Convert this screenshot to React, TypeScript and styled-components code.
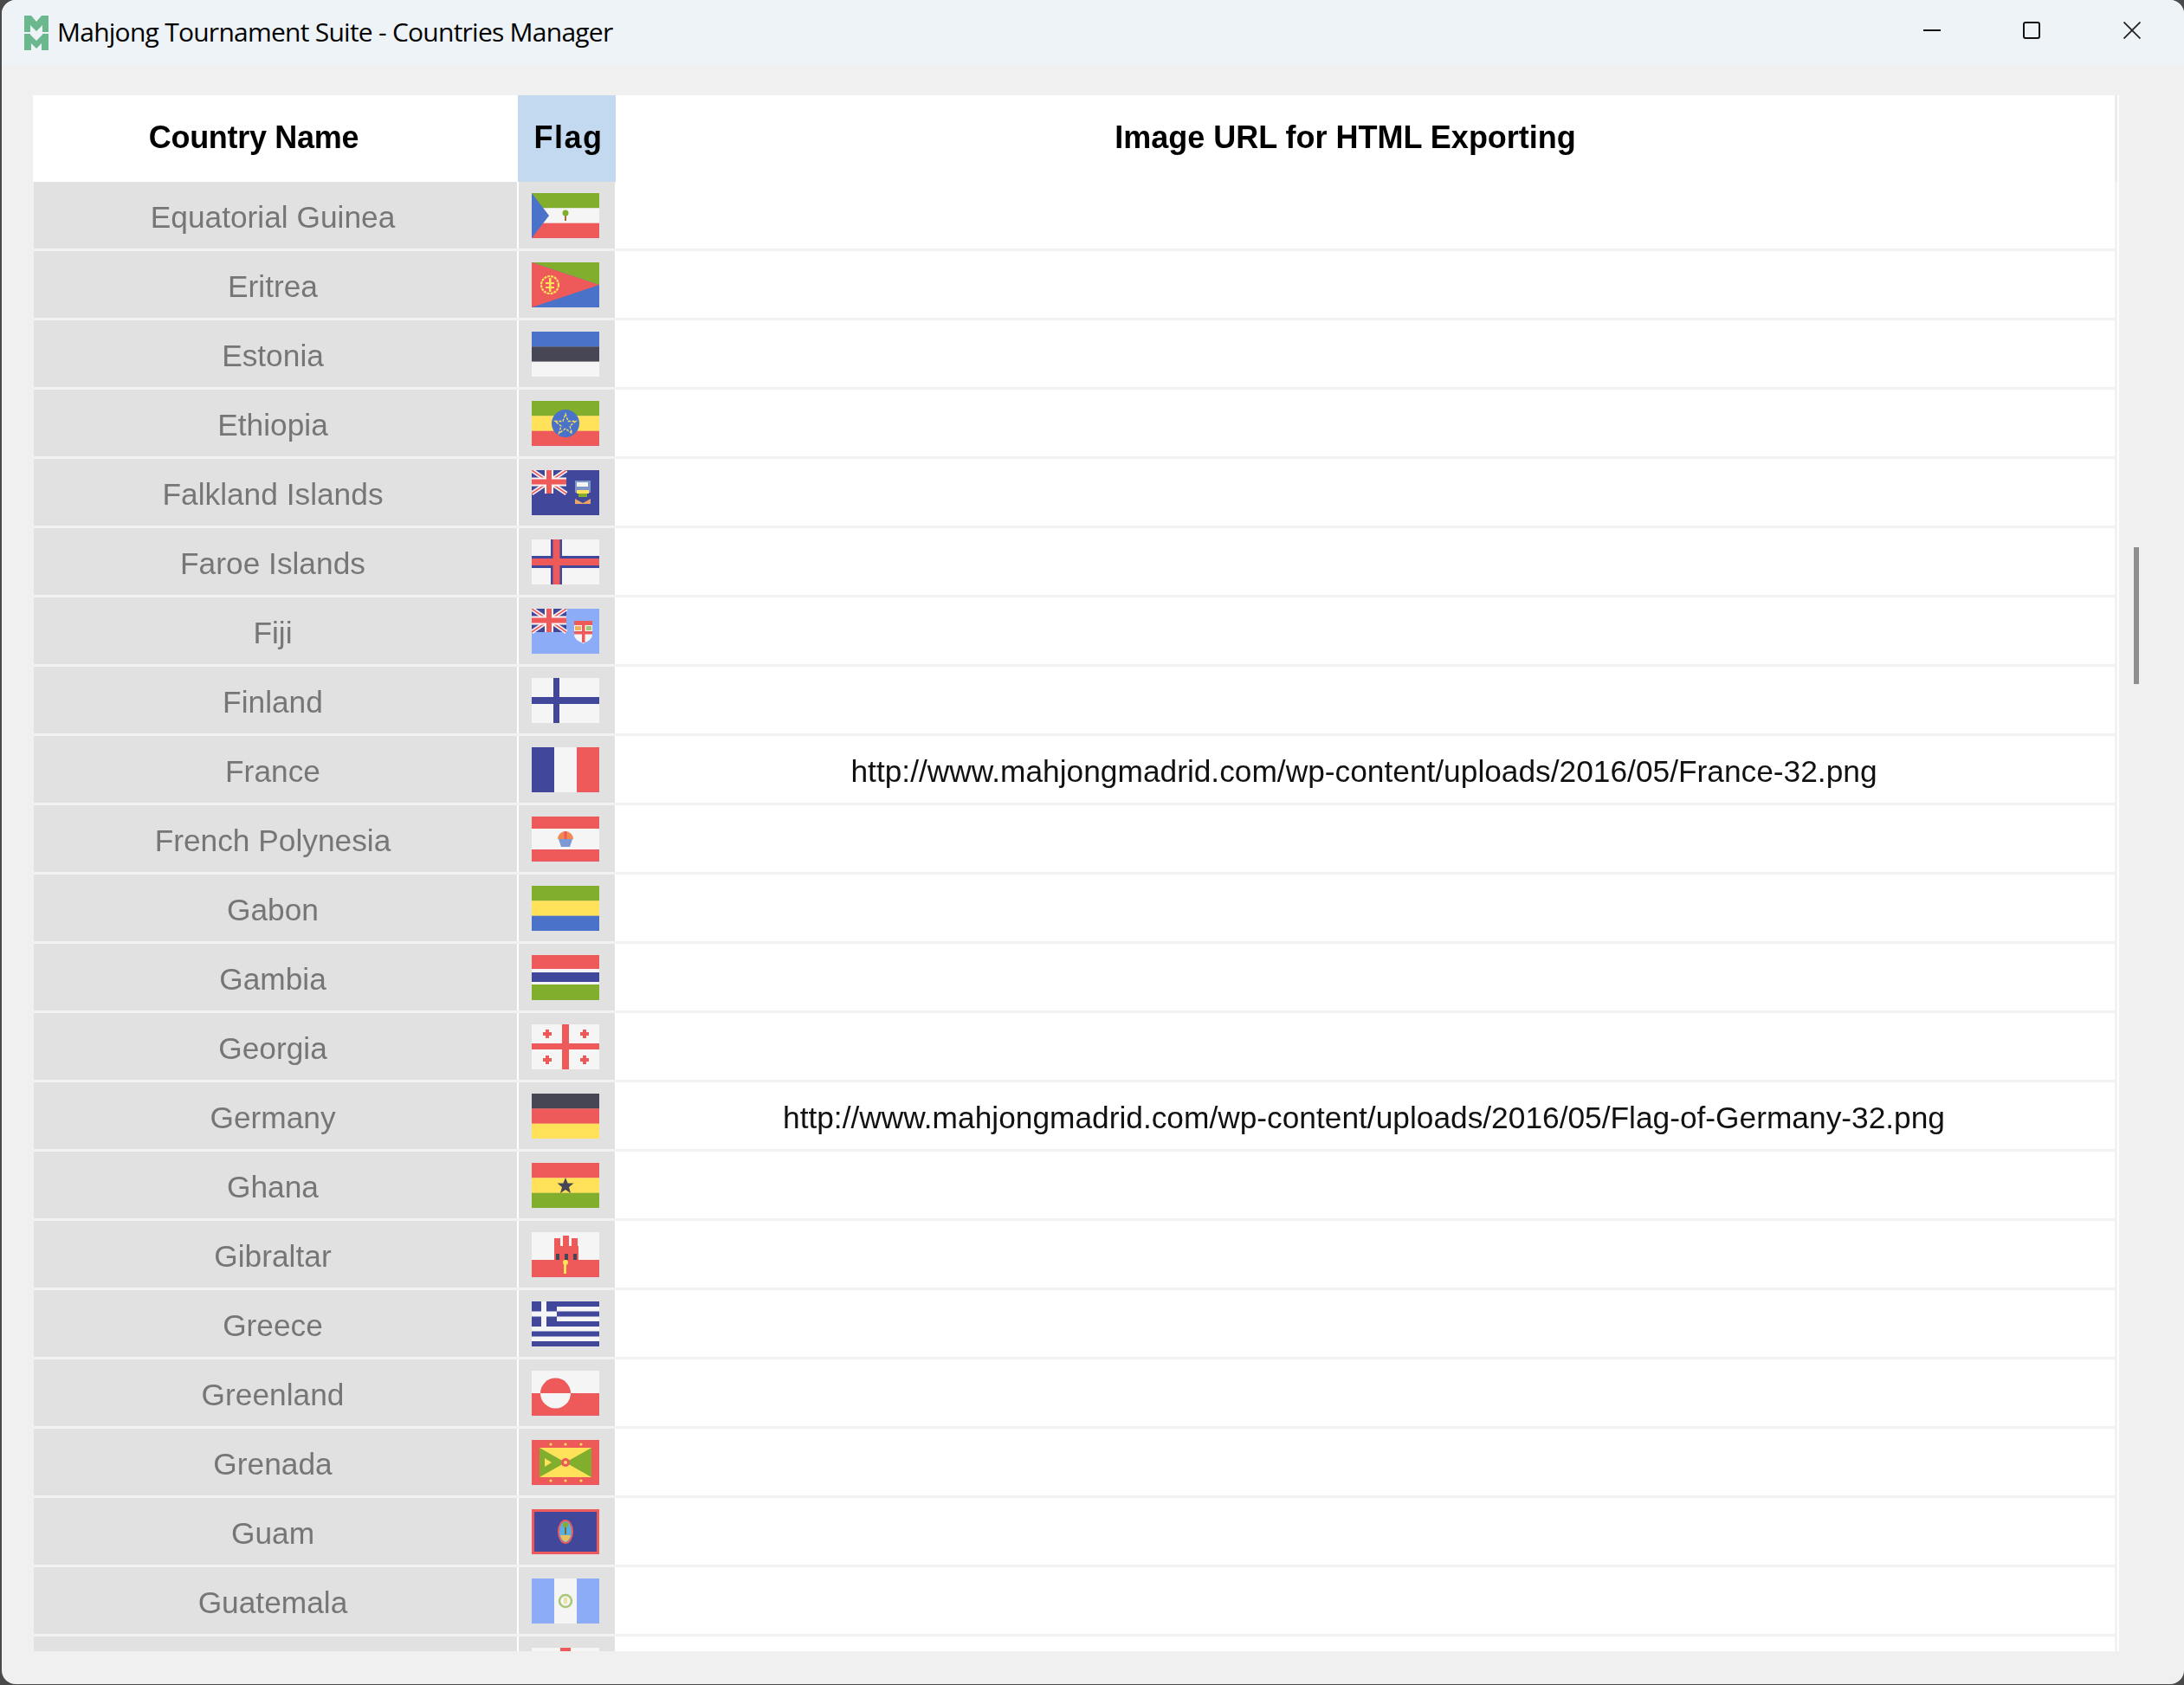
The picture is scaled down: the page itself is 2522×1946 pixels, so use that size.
import React from 'react';
import styled, { createGlobalStyle } from 'styled-components';

const GREEN = '#82ae2e';
const BLUE = '#4a72c8';
const RED = '#ee5a5a';
const WHITE = '#f5f5f5';
const NAVY = '#41479b';
const YELLOW = '#ffe15a';
const DARK = '#464655';
const SKY = '#8cacf8';

const GlobalStyle = createGlobalStyle`
  html, body {
    margin: 0;
    padding: 0;
    background: #4a4a4a;
  }
`;

const Window = styled.div`
  width: 2520px;
  height: 1945px;
  margin-left: 2px;
  display: flex;
  flex-direction: column;
  background: #f0f0f0;
  border-radius: 16px;
  overflow: hidden;
  position: relative;
`;

const TitleBar = styled.div`
  height: 75px;
  flex: none;
  background: #eef3f8;
  display: flex;
  align-items: center;
  padding: 0 2px 0 26px;
`;

const Title = styled.div`
  margin-left: 10px;
  font-family: 'Open Sans', sans-serif;
  font-size: 30px;
  letter-spacing: -0.75px;
  color: #000;
  white-space: nowrap;
  flex: 1;
  position: relative;
  top: -1px;
`;

const WindowButton = styled.div<{ $wide?: boolean }>`
  width: ${(p) => (p.$wide ? 117 : 115)}px;
  height: 75px;
  display: flex;
  align-items: center;
  justify-content: center;
  position: relative;
  top: -3px;
`;

const Content = styled.div`
  flex: 1;
  padding: 35px 0 38px 36px;
  min-height: 0;
  display: flex;
`;

const Table = styled.div`
  width: 2409px;
  height: 100%;
  overflow: hidden;
  display: flex;
  flex-direction: column;
`;

const HeaderRow = styled.div`
  display: grid;
  grid-template-columns: 560px 113px 1731px 5px;
  height: 100px;
  flex: none;
  background: #fff;
`;

const HeaderCell = styled.div<{ $active?: boolean; $shift?: number; $tracking?: number }>`
  display: flex;
  align-items: center;
  justify-content: center;
  font-family: 'Liberation Sans', Arial, sans-serif;
  font-weight: 700;
  font-size: 36px;
  letter-spacing: ${(p) => p.$tracking ?? 0}px;
  color: #000;
  background: ${(p) => (p.$active ? '#c3d9f0' : '#fff')};
  padding-right: ${(p) => p.$shift ?? 0}px;
  padding-left: ${(p) => (p.$active ? 4 : 0)}px;
  padding-bottom: 3px;
`;

const HeaderLabel = styled.span`
  filter: blur(0.5px);
`;

const HeaderEdge = styled.div`
  background: linear-gradient(to right, #ececec 0 3px, #fff 3px);
`;

const Row = styled.div`
  display: grid;
  grid-template-columns: 559px 113px 1731px 5px;
  box-sizing: border-box;
  height: 80px;
  margin-left: 1px;
  border-bottom: 3px solid #f2f2f2;
  background: #fff;
`;

const Cell = styled.div`
  display: flex;
  align-items: center;
  font-family: 'Liberation Sans', Arial, sans-serif;
  font-size: 35.3px;
`;

const NameCell = styled(Cell)`
  margin-right: 1px;
  background: #e1e1e1;
  justify-content: center;
  padding-right: 6px;
  color: #767676;
`;

const FlagCell = styled(Cell)`
  margin: 0 1px;
  background: #e1e1e1;
  padding-left: 15px;
`;

const UrlCell = styled(Cell)`
  justify-content: center;
  padding-right: 3px;
  color: #111;
`;

const CellText = styled.span`
  filter: blur(0.4px);
  position: relative;
  top: 2px;
`;

const RowEdge = styled.div`
  margin-bottom: -3px;
  background: linear-gradient(to right, #f2f2f2 0 3px, #fff 3px);
`;

const Body = styled.div`
  flex: 1;
  overflow: hidden;
`;

const FlagSvg = styled.svg`
  width: 78px;
  height: 52px;
  display: block;
  filter: blur(0.7px);
`;

const LogoSvg = styled.svg`
  width: 28px;
  height: 40px;
  flex: none;
  filter: blur(0.5px);
`;

const ScrollThumb = styled.div`
  position: absolute;
  left: 2462px;
  top: 632px;
  width: 6px;
  height: 158px;
  background: #8f8f8f;
  filter: blur(0.5px);
`;

const Rect = ({ x = 0, y = 0, w = 78, h = 52, c }: { x?: number; y?: number; w?: number; h?: number; c: string }) => (
  <rect x={x} y={y} width={w} height={h} fill={c} />
);

const Jack = () => (
  <g>
    <Rect w={40} h={27} c={NAVY} />
    <path d="M0 0L40 27M40 0L0 27" stroke={WHITE} strokeWidth="5" />
    <path d="M0 0L40 27M40 0L0 27" stroke={RED} strokeWidth="1.6" />
    <Rect x={15} w={10} h={27} c={WHITE} />
    <Rect y={8.5} w={40} h={10} c={WHITE} />
    <Rect x={17} w={6} h={27} c={RED} />
    <Rect y={10.5} w={40} h={6} c={RED} />
  </g>
);

const Stripes = ({ colors }: { colors: string[] }) => (
  <g>
    {colors.map((c, i) => (
      <Rect key={i} y={(52 / colors.length) * i} h={52 / colors.length + 0.2} c={c} />
    ))}
  </g>
);

const flags: Record<string, React.ReactNode> = {
  equatorial: (
    <g>
      <Stripes colors={[GREEN, WHITE, RED]} />
      <path d="M0 0L20 26L0 52Z" fill={BLUE} />
      <Rect x={38} y={21} w={2} h={11} c="#a86a3a" />
      <circle cx={39} cy={23} r={3.5} fill={GREEN} />
    </g>
  ),
  eritrea: (
    <g>
      <Rect c={BLUE} />
      <path d="M0 0H78V26Z" fill={GREEN} />
      <path d="M0 0L78 26L0 52Z" fill={RED} />
      <circle cx={21} cy={26} r={10} fill="none" stroke={YELLOW} strokeWidth="2.2" strokeDasharray="3 1" />
      <Rect x={20} y={18} w={2.5} h={16} c={YELLOW} />
      <Rect x={16} y={23} w={10} h={2} c={YELLOW} />
      <Rect x={16} y={28} w={10} h={2} c={YELLOW} />
    </g>
  ),
  estonia: <Stripes colors={[BLUE, DARK, WHITE]} />,
  ethiopia: (
    <g>
      <Stripes colors={[GREEN, YELLOW, RED]} />
      <circle cx={39} cy={26} r={16} fill={BLUE} />
      <path d="M39 15L42 23.5H51L44 29L46.5 37.5L39 32L31.5 37.5L34 29L27 23.5H36Z" fill="none" stroke={YELLOW} strokeWidth="1.3" strokeDasharray="3 1.5" />
    </g>
  ),
  falkland: (
    <g>
      <Rect c={NAVY} />
      <Jack />
      <Rect x={50} y={12} w={18} h={14} c="#7f96c8" />
      <Rect x={52} y={14} w={13} h={5} c={WHITE} />
      <Rect x={52} y={23} w={14} h={4} c={YELLOW} />
      <Rect x={54} y={27} w={10} h={4} c={GREEN} />
      <path d="M50 33L59 38L68 33V39H50Z" fill="#e8a468" />
    </g>
  ),
  faroe: (
    <g>
      <Rect c={WHITE} />
      <Rect x={22} w={13} h={52} c={NAVY} />
      <Rect y={19} h={14} c={NAVY} />
      <Rect x={24.5} w={8} h={52} c={RED} />
      <Rect y={22} h={8} c={RED} />
    </g>
  ),
  fiji: (
    <g>
      <Rect c={SKY} />
      <Jack />
      <path d="M49 14H70V30Q70 36 59.5 40Q49 36 49 30Z" fill={WHITE} />
      <Rect x={49} y={14} w={21} h={5} c={RED} />
      <Rect x={58} y={19} w={3.5} h={20} c={RED} />
      <Rect x={49} y={26} w={21} h={3.5} c={RED} />
      <Rect x={50} y={20} w={7} h={5} c="#f0b060" />
      <Rect x={63} y={20} w={6} h={5} c="#9cc878" />
    </g>
  ),
  finland: (
    <g>
      <Rect c={WHITE} />
      <Rect x={25} w={7} h={52} c={NAVY} />
      <Rect y={22} h={8} c={NAVY} />
    </g>
  ),
  france: (
    <g>
      <Rect w={26} c={NAVY} />
      <Rect x={26} w={26} c={WHITE} />
      <Rect x={52} w={26} c={RED} />
    </g>
  ),
  polynesia: (
    <g>
      <Rect c={WHITE} />
      <Rect h={14} c={RED} />
      <Rect y={38} h={14} c={RED} />
      <path d="M30 26a9 9 0 0 1 18 0Z" fill="#f08a50" />
      <Rect x={37.5} y={17} w={3} h={9} c={RED} />
      <path d="M31 26H47L44 35H34Z" fill={BLUE} opacity="0.7" />
    </g>
  ),
  gabon: <Stripes colors={[GREEN, YELLOW, BLUE]} />,
  gambia: (
    <g>
      <Rect c={WHITE} />
      <Rect h={16} c={RED} />
      <Rect y={20} h={11} c={NAVY} />
      <Rect y={34} h={18} c={GREEN} />
    </g>
  ),
  georgia: (
    <g>
      <Rect c={WHITE} />
      <Rect x={35} w={8} h={52} c={RED} />
      <Rect y={22} h={7} c={RED} />
      {[[18, 11], [61, 11], [18, 41], [61, 41]].map(([x, y]) => (
        <path key={`${x}-${y}`} d={`M${x - 2} ${y - 5}h4v3h3v4h-3v3h-4v-3h-3v-4h3z`} fill={RED} />
      ))}
    </g>
  ),
  germany: <Stripes colors={[DARK, RED, YELLOW]} />,
  ghana: (
    <g>
      <Stripes colors={[RED, YELLOW, GREEN]} />
      <path d="M39 17L41.6 23.6H48.5L43 28L45 35L39 31L33 35L35 28L29.5 23.6H36.4Z" fill={DARK} />
    </g>
  ),
  gibraltar: (
    <g>
      <Rect c={WHITE} />
      <Rect y={32} h={20} c={RED} />
      <Rect x={26} y={16} w={28} h={17} c={RED} />
      <Rect x={26} y={7} w={7} h={10} c={RED} />
      <Rect x={36} y={4} w={7} h={13} c={RED} />
      <Rect x={46} y={7} w={7} h={10} c={RED} />
      <Rect x={28} y={25} w={4} h={7} c={DARK} />
      <Rect x={38} y={25} w={4} h={7} c={DARK} />
      <Rect x={48} y={25} w={4} h={7} c={DARK} />
      <Rect x={37} y={33} w={3} h={15} c={YELLOW} />
      <circle cx={39} cy={35} r={3} fill={YELLOW} />
    </g>
  ),
  greece: (
    <g>
      <Rect c={WHITE} />
      {[0, 11.5, 23, 34.5, 46].map((y) => (
        <Rect key={y} y={y} h={6} c={NAVY} />
      ))}
      <Rect w={29} h={29} c={NAVY} />
      <Rect x={11} w={6} h={29} c={WHITE} />
      <Rect y={11.5} w={29} h={6} c={WHITE} />
    </g>
  ),
  greenland: (
    <g>
      <Rect c={WHITE} />
      <Rect y={26} h={26} c={RED} />
      <path d="M10 26a17.5 17.5 0 0 1 35 0Z" fill={RED} />
      <path d="M10 26a17.5 17.5 0 0 0 35 0Z" fill={WHITE} />
    </g>
  ),
  grenada: (
    <g>
      <Rect c={RED} />
      <Rect x={9} y={9} w={60} h={34} c={YELLOW} />
      <path d="M9 9L39 26L9 43ZM69 9L39 26L69 43Z" fill={GREEN} />
      <circle cx={39} cy={26} r={5} fill={RED} />
      <circle cx={39} cy={26} r={2} fill={YELLOW} />
      <path d="M15 21L23 26L15 31Z" fill={YELLOW} />
      {[22, 39, 57].map((x) => (
        <g key={x}>
          <circle cx={x} cy={5} r={1.6} fill={YELLOW} />
          <circle cx={x} cy={47} r={1.6} fill={YELLOW} />
        </g>
      ))}
    </g>
  ),
  guam: (
    <g>
      <Rect c={RED} />
      <Rect x={3} y={3} w={72} h={46} c={NAVY} />
      <ellipse cx={39} cy={26} rx={9} ry={14} fill={RED} />
      <ellipse cx={39} cy={26} rx={7} ry={12} fill="#58b0e0" />
      <path d="M33 30H45Q44 35 39 38Q34 35 33 30Z" fill="#e8c060" />
      <Rect x={38} y={18} w={2} h={11} c="#7a6a30" />
      <circle cx={39} cy={18} r={3} fill={GREEN} />
    </g>
  ),
  guatemala: (
    <g>
      <Rect w={26} c={SKY} />
      <Rect x={26} w={26} c={WHITE} />
      <Rect x={52} w={26} c={SKY} />
      <circle cx={39} cy={26} r={7} fill="none" stroke="#a8c878" strokeWidth="2.5" />
      <Rect x={37} y={22} w={4} h={7} c="#e8e4a0" />
    </g>
  ),
  guernsey: (
    <g>
      <Rect c={WHITE} />
      <Rect x={33} w={12} h={52} c={RED} />
    </g>
  ),
};

type Country = { name: string; flag: string; url?: string };

const countries: Country[] = [
  { name: 'Equatorial Guinea', flag: 'equatorial' },
  { name: 'Eritrea', flag: 'eritrea' },
  { name: 'Estonia', flag: 'estonia' },
  { name: 'Ethiopia', flag: 'ethiopia' },
  { name: 'Falkland Islands', flag: 'falkland' },
  { name: 'Faroe Islands', flag: 'faroe' },
  { name: 'Fiji', flag: 'fiji' },
  { name: 'Finland', flag: 'finland' },
  { name: 'France', flag: 'france', url: 'http://www.mahjongmadrid.com/wp-content/uploads/2016/05/France-32.png' },
  { name: 'French Polynesia', flag: 'polynesia' },
  { name: 'Gabon', flag: 'gabon' },
  { name: 'Gambia', flag: 'gambia' },
  { name: 'Georgia', flag: 'georgia' },
  { name: 'Germany', flag: 'germany', url: 'http://www.mahjongmadrid.com/wp-content/uploads/2016/05/Flag-of-Germany-32.png' },
  { name: 'Ghana', flag: 'ghana' },
  { name: 'Gibraltar', flag: 'gibraltar' },
  { name: 'Greece', flag: 'greece' },
  { name: 'Greenland', flag: 'greenland' },
  { name: 'Grenada', flag: 'grenada' },
  { name: 'Guam', flag: 'guam' },
  { name: 'Guatemala', flag: 'guatemala' },
  { name: '', flag: 'guernsey' },
];

const App: React.FC = () => (
  <>
    <GlobalStyle />
    <Window>
      <TitleBar>
        <LogoSvg viewBox="0 0 28 40">
          <path
            d="M0 0H8L14 7L20 0H28V19H21V11L14 18L7 11V19H0ZM0 21H7V22L14 29L21 22V21H28V40H20V32L14 38L8 32V40H0Z"
            fill="#6bb88f"
          />
        </LogoSvg>
        <Title>Mahjong Tournament Suite - Countries Manager</Title>
        <WindowButton>
          <svg width="20" height="20" viewBox="0 0 20 20">
            <rect y="9" width="20" height="2" fill="#111" />
          </svg>
        </WindowButton>
        <WindowButton>
          <svg width="20" height="20" viewBox="0 0 20 20">
            <rect x="1" y="1" width="18" height="18" rx="2" fill="none" stroke="#111" strokeWidth="2" />
          </svg>
        </WindowButton>
        <WindowButton $wide>
          <svg width="20" height="20" viewBox="0 0 20 20">
            <path d="M0.5 0.5L19.5 19.5M19.5 0.5L0.5 19.5" stroke="#222" strokeWidth="1.8" />
          </svg>
        </WindowButton>
      </TitleBar>
      <Content>
        <Table>
          <HeaderRow>
            <HeaderCell $shift={50} $tracking={-0.3}>
              <HeaderLabel>Country Name</HeaderLabel>
            </HeaderCell>
            <HeaderCell $active $tracking={1.5}>
              <HeaderLabel>Flag</HeaderLabel>
            </HeaderCell>
            <HeaderCell $shift={46}>
              <HeaderLabel>Image URL for HTML Exporting</HeaderLabel>
            </HeaderCell>
            <HeaderEdge />
          </HeaderRow>
          <Body>
            {countries.map((c) => (
              <Row key={c.flag}>
                <NameCell>
                  <CellText>{c.name}</CellText>
                </NameCell>
                <FlagCell>
                  <FlagSvg viewBox="0 0 78 52">{flags[c.flag]}</FlagSvg>
                </FlagCell>
                <UrlCell>
                  <CellText>{c.url}</CellText>
                </UrlCell>
                <RowEdge />
              </Row>
            ))}
          </Body>
        </Table>
      </Content>
      <ScrollThumb />
    </Window>
  </>
);

export default App;
